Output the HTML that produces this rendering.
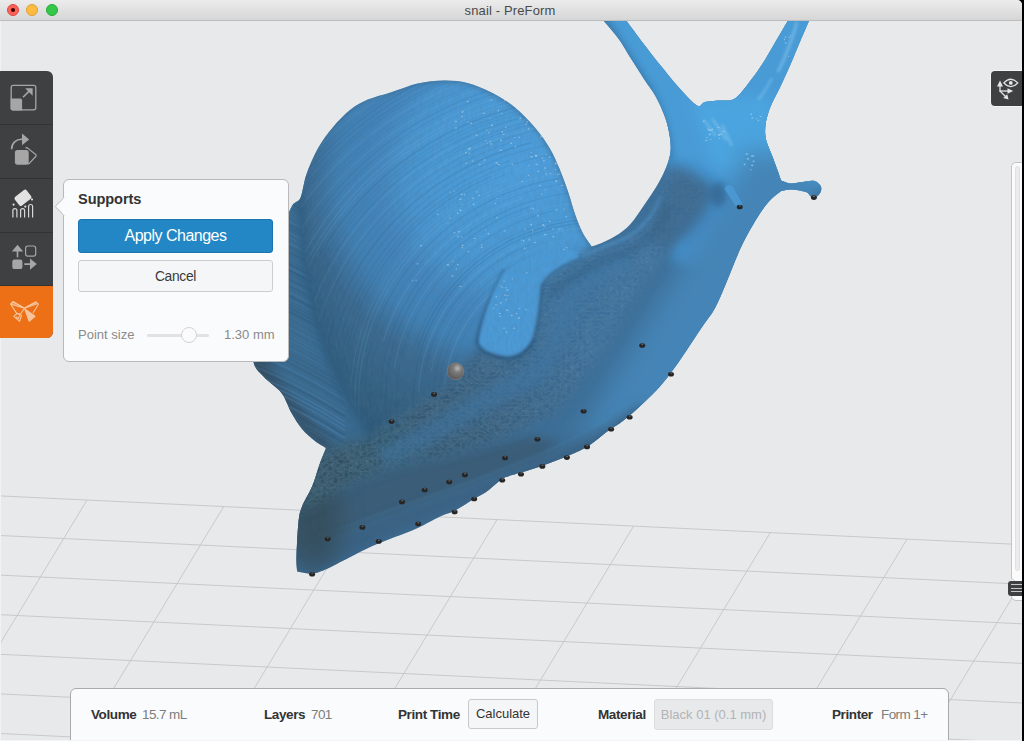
<!DOCTYPE html>
<html><head><meta charset="utf-8">
<style>
html,body{margin:0;padding:0;width:1024px;height:741px;overflow:hidden;background:#000;}
*{box-sizing:border-box;}
body{font-family:"Liberation Sans",sans-serif;position:relative;}
#win{position:absolute;left:0;top:0;width:1022px;height:741px;background:#e8e9eb;overflow:hidden;border-radius:0 5px 0 0;}
#title{position:absolute;left:0;top:0;width:1022px;height:21px;background:linear-gradient(#ececec,#d6d6d6);border-bottom:1px solid #bdbdbd;}
#title .t{position:absolute;left:0;width:1020px;top:3px;text-align:center;font-size:13px;color:#4a4a4a;letter-spacing:0.14px;}
.tl{position:absolute;top:4px;width:12px;height:12px;border-radius:50%;}
#scene{position:absolute;left:0;top:0;}
#tb{position:absolute;left:0;top:71px;width:53px;height:267px;background:#3f4042;border-radius:0 6px 6px 0;overflow:hidden;}
#tb .sep{position:absolute;left:0;width:53px;height:1px;background:#323335;}
#tb .or{position:absolute;left:0;top:215px;width:53px;height:52px;background:#ee7016;}
#pop{position:absolute;left:63px;top:179px;width:226px;height:183px;background:#fafbfc;border:1px solid #b9b9bb;border-radius:6px;}
.btn{position:absolute;border-radius:3px;text-align:center;}
#panel{position:absolute;left:70px;top:688px;width:879px;height:70px;background:#fafbfc;border:1px solid #a9aaac;border-radius:6px;}
.lb{position:absolute;top:18px;font-size:13.5px;font-weight:bold;color:#333;letter-spacing:-0.4px;}
.vl{position:absolute;top:18px;font-size:13.5px;color:#7d7d7d;letter-spacing:-0.6px;}
</style></head><body>
<div id="win">
<svg id="scene" width="1022" height="741" viewBox="0 0 1022 741">
<g stroke="#c9c9cb" stroke-width="1" fill="none">
<line x1="0.0" y1="495.9" x2="1024.0" y2="544.7"/>
<line x1="0.0" y1="535.5" x2="1024.0" y2="584.3"/>
<line x1="0.0" y1="575.1" x2="1024.0" y2="623.9"/>
<line x1="0.0" y1="614.7" x2="1024.0" y2="663.5"/>
<line x1="0.0" y1="654.3" x2="1024.0" y2="703.1"/>
<line x1="0.0" y1="693.9" x2="1024.0" y2="742.7"/>
<line x1="0.0" y1="733.5" x2="1024.0" y2="782.3"/>
<line x1="87.0" y1="500.0" x2="-70.3" y2="760.0"/>
<line x1="223.7" y1="506.6" x2="70.3" y2="760.0"/>
<line x1="360.3" y1="513.1" x2="210.9" y2="760.0"/>
<line x1="497.0" y1="519.6" x2="351.5" y2="760.0"/>
<line x1="633.6" y1="526.1" x2="492.1" y2="760.0"/>
<line x1="770.3" y1="532.6" x2="632.7" y2="760.0"/>
<line x1="907.0" y1="539.2" x2="773.4" y2="760.0"/>
<line x1="1043.6" y1="545.7" x2="914.0" y2="760.0"/>
</g>
<!--SNAIL-->
<defs>
<clipPath id="clip"><path d="M596.0,12.0 C599.6,16.3 612.0,30.0 617.8,37.7 C623.6,45.5 626.6,51.6 631.0,58.5 C635.4,65.4 640.1,72.9 644.2,79.2 C648.3,85.5 652.1,89.9 655.6,96.2 C659.1,102.5 662.6,110.4 665.0,117.0 C667.4,123.6 668.8,130.1 669.7,135.9 C670.6,141.7 671.1,146.7 670.5,152.0 C669.9,157.3 668.2,162.2 666.0,167.8 C663.8,173.4 660.6,179.7 657.1,185.6 C653.6,191.5 649.7,197.0 645.2,203.4 C640.7,209.8 635.2,218.8 630.3,224.2 C625.3,229.6 620.5,232.9 615.5,236.1 C610.5,239.3 604.6,241.8 600.6,243.5 C596.6,245.2 593.2,246.0 591.7,246.5 C590.2,244.3 585.5,238.3 582.8,233.1 C580.1,227.9 577.9,222.2 575.4,215.3 C572.9,208.4 570.7,199.5 568.0,191.6 C565.3,183.7 562.2,175.1 559.1,167.8 C556.0,160.5 553.6,154.6 549.6,147.9 C545.6,141.2 540.8,134.2 534.9,127.4 C529.0,120.6 521.7,112.8 514.4,106.9 C507.1,101.0 498.8,96.2 491.0,92.2 C483.2,88.2 475.3,84.9 467.5,82.9 C459.7,81.0 452.4,80.4 444.1,80.5 C435.8,80.6 426.5,81.5 417.7,83.4 C408.9,85.4 399.6,89.5 391.3,92.2 C383.0,94.9 374.7,96.7 367.9,99.6 C361.1,102.5 356.2,105.2 350.3,109.8 C344.4,114.4 338.1,121.1 332.7,127.4 C327.3,133.8 322.5,140.1 318.1,147.9 C313.7,155.7 309.3,166.0 306.4,174.3 C303.5,182.6 302.9,192.3 300.5,197.7 C298.1,203.1 295.1,200.3 291.7,206.5 C288.3,212.7 284.9,222.8 280.0,235.0 C275.1,247.2 266.5,264.2 262.0,280.0 C257.5,295.8 254.4,316.3 253.0,330.0 C251.6,343.7 251.7,354.2 253.5,362.0 C255.3,369.8 259.3,371.8 264.0,377.0 C268.7,382.2 276.9,387.0 281.5,393.0 C286.1,399.0 288.1,407.0 291.5,413.0 C294.9,419.0 298.1,424.3 302.0,429.0 C305.9,433.7 311.0,437.8 315.0,441.0 C319.0,444.2 324.2,446.8 326.0,448.0 C324.8,451.0 321.3,459.5 319.0,465.9 C316.7,472.3 315.0,479.7 312.1,486.6 C309.2,493.5 304.1,501.1 301.8,507.2 C299.5,513.3 299.3,514.9 298.4,523.3 C297.5,531.7 296.7,549.7 296.5,557.7 C296.3,565.7 297.1,569.2 297.2,571.5 C299.7,571.8 307.3,573.8 312.1,573.4 C316.9,573.0 319.8,571.8 325.9,569.2 C332.0,566.6 341.2,561.5 348.9,557.7 C356.5,553.9 364.1,549.7 371.8,546.3 C379.5,542.9 387.2,540.2 394.8,537.1 C402.4,534.0 410.2,531.4 417.7,527.9 C425.2,524.4 433.8,519.3 440.0,516.4 C446.2,513.5 449.4,513.4 455.2,510.4 C461.0,507.4 469.5,501.7 474.7,498.6 C479.9,495.5 482.5,494.6 486.4,491.8 C490.3,489.0 494.9,484.4 498.1,482.0 C501.4,479.6 502.0,478.7 505.9,477.1 C509.8,475.5 515.4,474.2 521.6,472.3 C527.8,470.4 535.2,468.2 543.0,465.4 C550.8,462.6 560.6,459.1 568.4,455.7 C576.2,452.3 583.4,449.0 589.9,444.9 C596.4,440.8 601.9,435.4 607.5,431.3 C613.1,427.2 617.8,425.0 623.7,420.3 C629.7,415.6 637.1,409.0 643.2,403.3 C649.3,397.6 655.2,392.0 660.2,386.3 C665.2,380.6 669.0,375.4 673.5,369.3 C678.0,363.2 682.2,356.8 686.9,349.9 C691.5,343.0 696.8,334.9 701.4,328.0 C706.0,321.1 710.8,315.9 714.8,308.6 C718.8,301.3 722.2,292.4 725.7,284.3 C729.2,276.2 732.5,267.1 735.5,260.0 C738.5,252.9 740.6,247.8 743.5,242.0 C746.4,236.2 749.8,230.3 752.9,225.0 C756.0,219.7 759.1,214.3 762.3,209.9 C765.4,205.5 768.6,201.8 771.8,198.6 C774.9,195.4 779.6,192.3 781.2,191.0 C782.8,190.8 786.6,189.3 790.7,189.5 C794.8,189.7 802.4,190.8 805.8,192.0 C809.2,193.2 809.3,195.7 811.0,196.5 C812.7,197.3 814.4,197.7 816.0,197.0 C817.6,196.3 819.7,194.3 820.5,192.5 C821.3,190.7 821.8,188.2 820.9,186.3 C820.0,184.4 817.7,182.0 815.2,181.2 C812.7,180.4 809.9,181.2 805.8,181.6 C801.7,182.0 794.8,183.7 790.7,183.5 C786.6,183.3 782.8,181.1 781.2,180.6 C780.6,178.9 779.1,174.4 777.5,170.2 C775.9,165.9 773.7,160.1 771.8,155.1 C769.9,150.1 767.2,144.5 766.1,140.0 C765.0,135.5 765.0,131.8 765.2,128.0 C765.4,124.2 766.0,121.0 767.1,117.0 C768.2,113.0 769.4,109.1 771.8,103.8 C774.1,98.5 778.1,91.5 781.2,84.9 C784.4,78.3 787.6,71.3 790.7,64.1 C793.9,56.9 796.4,50.2 800.1,41.5 C803.8,32.8 810.9,16.9 813.0,12.0 C809.7,12.0 796.3,12.0 793.0,12.0 C790.1,16.9 780.7,32.8 775.6,41.5 C770.5,50.2 767.0,56.9 762.3,64.1 C757.6,71.3 751.9,79.1 747.2,84.9 C742.5,90.7 738.7,96.4 734.0,99.0 C729.3,101.6 723.7,100.0 718.9,100.5 C714.1,101.0 708.6,101.2 705.0,102.0 C701.4,102.8 701.5,108.0 697.0,105.5 C692.5,103.0 684.5,93.7 678.2,86.8 C671.9,79.9 664.8,70.7 659.4,64.1 C654.0,57.5 652.7,55.8 646.1,47.1 C639.5,38.4 624.4,17.9 620.0,12.0 C616.0,12.0 600.0,12.0 596.0,12.0 Z"/></clipPath>
<clipPath id="domeClip"><path d="M300.5,187.6 L302.4,236.7 308,274.5 319.4,323.6 330.7,361.4 345.8,391.6 361,418 372.3,437 392,421 451,382 478,350 488,352 507,356 521,353 532,338 538,312 540,285 549,274 566,263 580,257 591.7,246.5 582.8,233.1 575.4,215.3 568,191.6 559.1,167.8 549.6,147.9 534.9,127.4 514.4,106.9 491,92.2 467.5,82.9 444.1,80.5 417.7,83.4 391.3,92.2 367.9,99.6 350.3,109.8 332.7,127.4 318.1,147.9 306.4,174.3 Z"/></clipPath>
<mask id="mantMask" maskUnits="userSpaceOnUse" x="0" y="0" width="1022" height="741"><path d="M330,448 L372,437 392,421 451,382 478,350 488,352 507,356 521,353 532,338 538,312 540,285 549,274 566,263 580,257 608,243 634,233 650,215 662,190 670,165 690,172 712,188 700,212 672,245 640,290 605,350 560,410 488,445 446,456 403,465 361,479 324,499 298,513 315,455 Z" fill="#fff" filter="url(#b6)"/></mask>
<filter id="b15" filterUnits="userSpaceOnUse" x="0" y="0" width="1022" height="741"><feGaussianBlur stdDeviation="1.5"/></filter>
<filter id="b3" filterUnits="userSpaceOnUse" x="0" y="0" width="1022" height="741"><feGaussianBlur stdDeviation="3"/></filter>
<filter id="b6" filterUnits="userSpaceOnUse" x="0" y="0" width="1022" height="741"><feGaussianBlur stdDeviation="6"/></filter>
<filter id="b12" filterUnits="userSpaceOnUse" x="0" y="0" width="1022" height="741"><feGaussianBlur stdDeviation="12"/></filter>
<filter id="tex" filterUnits="userSpaceOnUse" x="0" y="0" width="1022" height="741"><feTurbulence type="fractalNoise" baseFrequency="0.35 0.12" numOctaves="2" seed="3"/><feColorMatrix type="matrix" values="0 0 0 0 0.1  0 0 0 0 0.2  0 0 0 0 0.3  0 0 0 -2.2 1.3"/></filter>
<filter id="tex2" filterUnits="userSpaceOnUse" x="0" y="0" width="1022" height="741"><feTurbulence type="turbulence" baseFrequency="0.18 0.25" numOctaves="2" seed="5"/><feColorMatrix type="matrix" values="0 0 0 0 0.12  0 0 0 0 0.25  0 0 0 0 0.38  -1.6 0 0 0 0.95"/></filter>
<filter id="tex3" filterUnits="userSpaceOnUse" x="0" y="0" width="1022" height="741"><feTurbulence type="turbulence" baseFrequency="0.2 0.3" numOctaves="2" seed="9"/><feColorMatrix type="matrix" values="0 0 0 0 0.45  0 0 0 0 0.7  0 0 0 0 0.9  2.2 0 0 0 -0.55"/></filter>
<radialGradient id="domeG" cx="520" cy="170" r="300" gradientUnits="userSpaceOnUse">
<stop offset="0" stop-color="#4f9fdc"/><stop offset="0.12" stop-color="#4d9cd9"/><stop offset="0.3" stop-color="#4b98d3"/><stop offset="0.39" stop-color="#4892cb"/><stop offset="0.48" stop-color="#4485bc"/><stop offset="0.6" stop-color="#4180b3"/><stop offset="0.71" stop-color="#3b6a90"/><stop offset="0.9" stop-color="#35607f"/><stop offset="1" stop-color="#325a78"/></radialGradient>
<linearGradient id="mantG" x1="340" y1="470" x2="700" y2="200" gradientUnits="userSpaceOnUse">
<stop offset="0" stop-color="#30505f"/><stop offset="0.3" stop-color="#365a76"/><stop offset="0.6" stop-color="#3b6d98"/><stop offset="1" stop-color="#3d73a0"/></linearGradient>
<linearGradient id="whorlG" x1="255" y1="360" x2="330" y2="330" gradientUnits="userSpaceOnUse">
<stop offset="0" stop-color="#385770"/><stop offset="0.3" stop-color="#3b6a8f"/><stop offset="1" stop-color="#3a6a8f"/></linearGradient>
</defs>
<g clip-path="url(#clip)">
<rect x="240" y="10" width="600" height="580" fill="#3d6f98"/>
<path filter="url(#b6)" fill="#4590cb" d="M660,120 L780,120 770,210 735,250 700,270 670,260 675,200 Z"/>
<path filter="url(#b6)" fill="#4a9bd6" d="M590,0 L840,0 840,180 780,200 740,200 715,175 690,160 668,165 660,120 Z"/>
<path filter="url(#b6)" fill="#4ca4df" d="M690,100 L770,95 780,160 750,180 712,165 Z"/>
<path filter="url(#b12)" fill="#4484b6" d="M745,150 L820,160 800,260 720,400 640,470 575,445 615,375 650,315 685,260 712,218 735,180 Z"/>
<path filter="url(#b6)" fill="#3a5d78" d="M280,513 L324,499 361,479 403,465 446,456 488,445 530,436 560,440 545,462 460,495 375,530 280,575 Z"/>
<path filter="url(#b6)" fill="#3b6283" d="M300,556 L375,522 460,490 545,456 605,428 640,405 660,420 600,450 520,485 420,525 330,566 300,580 Z"/>
<path filter="url(#b3)" fill="none" stroke="#4d86ad" stroke-width="4" opacity="0.22" d="M302,552 C340,535 380,518 460,490 C500,476 530,466 600,432"/>
<path filter="url(#b15)" fill="none" stroke="#5590b8" stroke-width="1.5" opacity="0.3" d="M310,540 C360,520 420,500 480,478 C520,462 560,448 610,418"/>
<ellipse filter="url(#b12)" cx="315" cy="520" rx="26" ry="50" fill="#34505f"/>
<path filter="url(#b3)" fill="url(#whorlG)" d="M300,185 L296,200 285,215 262,260 250,320 252,360 262,378 278,396 296,414 316,438 330,448 372,437 361,418 346,392 331,361 319,324 308,275 302,237 Z"/>
<path filter="url(#b6)" fill="none" stroke="#344b5c" stroke-width="14" opacity="0.8" d="M254,340 L256,365 265,382 280,398 296,414 310,432 330,448"/>
<clipPath id="whClip"><path d="M300,185 L296,200 285,215 262,260 250,320 252,360 262,378 278,396 296,414 316,438 330,448 372,437 361,418 346,392 331,361 319,324 308,275 302,237 Z"/></clipPath>
<g clip-path="url(#whClip)" fill="none"><path d="M245,184.4 Q290,199.4 345,234.4" stroke="#22445e" stroke-width="1.3" opacity="0.24"/><path d="M245,188.9 Q290,203.9 345,238.9" stroke="#22445e" stroke-width="1.3" opacity="0.13"/><path d="M245,193.8 Q290,208.8 345,243.8" stroke="#5c9bd0" stroke-width="1.1" opacity="0.11"/><path d="M245,197.0 Q290,212.0 345,247.0" stroke="#5c9bd0" stroke-width="0.8" opacity="0.20"/><path d="M245,203.0 Q290,218.0 345,253.0" stroke="#5c9bd0" stroke-width="1.4" opacity="0.20"/><path d="M245,206.5 Q290,221.5 345,256.5" stroke="#22445e" stroke-width="0.9" opacity="0.18"/><path d="M245,210.0 Q290,225.0 345,260.0" stroke="#22445e" stroke-width="1.3" opacity="0.10"/><path d="M245,214.4 Q290,229.4 345,264.4" stroke="#5c9bd0" stroke-width="1.4" opacity="0.18"/><path d="M245,218.9 Q290,233.9 345,268.9" stroke="#5c9bd0" stroke-width="1.1" opacity="0.17"/><path d="M245,224.8 Q290,239.8 345,274.8" stroke="#5c9bd0" stroke-width="1.5" opacity="0.23"/><path d="M245,228.8 Q290,243.8 345,278.8" stroke="#22445e" stroke-width="0.9" opacity="0.14"/><path d="M245,234.1 Q290,249.1 345,284.1" stroke="#22445e" stroke-width="1.2" opacity="0.23"/><path d="M245,240.0 Q290,255.0 345,290.0" stroke="#5c9bd0" stroke-width="1.0" opacity="0.10"/><path d="M245,245.7 Q290,260.7 345,295.7" stroke="#22445e" stroke-width="1.2" opacity="0.25"/><path d="M245,248.9 Q290,263.9 345,298.9" stroke="#5c9bd0" stroke-width="1.1" opacity="0.22"/><path d="M245,252.2 Q290,267.2 345,302.2" stroke="#22445e" stroke-width="1.6" opacity="0.24"/><path d="M245,255.5 Q290,270.5 345,305.5" stroke="#22445e" stroke-width="0.9" opacity="0.12"/><path d="M245,260.9 Q290,275.9 345,310.9" stroke="#22445e" stroke-width="1.2" opacity="0.18"/><path d="M245,264.5 Q290,279.5 345,314.5" stroke="#5c9bd0" stroke-width="1.4" opacity="0.12"/><path d="M245,267.8 Q290,282.8 345,317.8" stroke="#22445e" stroke-width="1.1" opacity="0.13"/><path d="M245,273.8 Q290,288.8 345,323.8" stroke="#5c9bd0" stroke-width="1.7" opacity="0.15"/><path d="M245,277.4 Q290,292.4 345,327.4" stroke="#22445e" stroke-width="1.4" opacity="0.23"/><path d="M245,280.7 Q290,295.7 345,330.7" stroke="#5c9bd0" stroke-width="1.1" opacity="0.13"/><path d="M245,286.0 Q290,301.0 345,336.0" stroke="#22445e" stroke-width="0.9" opacity="0.14"/><path d="M245,289.3 Q290,304.3 345,339.3" stroke="#22445e" stroke-width="1.4" opacity="0.14"/><path d="M245,293.4 Q290,308.4 345,343.4" stroke="#22445e" stroke-width="1.3" opacity="0.24"/><path d="M245,298.1 Q290,313.1 345,348.1" stroke="#5c9bd0" stroke-width="1.0" opacity="0.13"/><path d="M245,303.8 Q290,318.8 345,353.8" stroke="#5c9bd0" stroke-width="1.0" opacity="0.14"/><path d="M245,309.1 Q290,324.1 345,359.1" stroke="#5c9bd0" stroke-width="1.8" opacity="0.13"/><path d="M245,314.7 Q290,329.7 345,364.7" stroke="#5c9bd0" stroke-width="0.9" opacity="0.16"/><path d="M245,317.8 Q290,332.8 345,367.8" stroke="#5c9bd0" stroke-width="1.5" opacity="0.14"/><path d="M245,321.6 Q290,336.6 345,371.6" stroke="#5c9bd0" stroke-width="1.1" opacity="0.19"/><path d="M245,325.1 Q290,340.1 345,375.1" stroke="#5c9bd0" stroke-width="1.0" opacity="0.11"/><path d="M245,329.8 Q290,344.8 345,379.8" stroke="#5c9bd0" stroke-width="1.1" opacity="0.19"/><path d="M245,335.5 Q290,350.5 345,385.5" stroke="#22445e" stroke-width="1.1" opacity="0.10"/><path d="M245,339.9 Q290,354.9 345,389.9" stroke="#22445e" stroke-width="1.2" opacity="0.13"/><path d="M245,344.6 Q290,359.6 345,394.6" stroke="#22445e" stroke-width="1.7" opacity="0.15"/><path d="M245,350.5 Q290,365.5 345,400.5" stroke="#5c9bd0" stroke-width="1.4" opacity="0.20"/><path d="M245,354.0 Q290,369.0 345,404.0" stroke="#22445e" stroke-width="1.7" opacity="0.10"/><path d="M245,359.1 Q290,374.1 345,409.1" stroke="#5c9bd0" stroke-width="1.4" opacity="0.10"/><path d="M245,363.5 Q290,378.5 345,413.5" stroke="#5c9bd0" stroke-width="1.8" opacity="0.15"/><path d="M245,366.7 Q290,381.7 345,416.7" stroke="#22445e" stroke-width="1.7" opacity="0.21"/><path d="M245,372.0 Q290,387.0 345,422.0" stroke="#5c9bd0" stroke-width="1.7" opacity="0.22"/><path d="M245,376.0 Q290,391.0 345,426.0" stroke="#5c9bd0" stroke-width="1.7" opacity="0.24"/><path d="M245,380.3 Q290,395.3 345,430.3" stroke="#5c9bd0" stroke-width="1.4" opacity="0.23"/><path d="M245,385.1 Q290,400.1 345,435.1" stroke="#22445e" stroke-width="1.4" opacity="0.19"/><path d="M245,388.4 Q290,403.4 345,438.4" stroke="#5c9bd0" stroke-width="1.7" opacity="0.25"/><path d="M245,393.6 Q290,408.6 345,443.6" stroke="#22445e" stroke-width="1.4" opacity="0.21"/><path d="M245,397.9 Q290,412.9 345,447.9" stroke="#5c9bd0" stroke-width="1.6" opacity="0.11"/><path d="M245,401.0 Q290,416.0 345,451.0" stroke="#5c9bd0" stroke-width="1.0" opacity="0.17"/><path d="M245,406.1 Q290,421.1 345,456.1" stroke="#22445e" stroke-width="1.7" opacity="0.19"/><path d="M245,409.8 Q290,424.8 345,459.8" stroke="#22445e" stroke-width="1.5" opacity="0.15"/><path d="M245,413.4 Q290,428.4 345,463.4" stroke="#22445e" stroke-width="1.5" opacity="0.24"/><path d="M245,417.8 Q290,432.8 345,467.8" stroke="#5c9bd0" stroke-width="1.5" opacity="0.15"/><path d="M245,421.4 Q290,436.4 345,471.4" stroke="#22445e" stroke-width="1.7" opacity="0.22"/><path d="M245,427.0 Q290,442.0 345,477.0" stroke="#22445e" stroke-width="1.1" opacity="0.19"/><path d="M245,430.4 Q290,445.4 345,480.4" stroke="#22445e" stroke-width="1.6" opacity="0.23"/><path d="M245,435.5 Q290,450.5 345,485.5" stroke="#5c9bd0" stroke-width="1.0" opacity="0.14"/><path d="M245,439.9 Q290,454.9 345,489.9" stroke="#22445e" stroke-width="1.2" opacity="0.13"/><path d="M245,444.8 Q290,459.8 345,494.8" stroke="#22445e" stroke-width="1.6" opacity="0.15"/><path d="M245,450.7 Q290,465.7 345,500.7" stroke="#22445e" stroke-width="0.8" opacity="0.11"/><path d="M245,456.3 Q290,471.3 345,506.3" stroke="#22445e" stroke-width="1.4" opacity="0.21"/><path d="M245,460.3 Q290,475.3 345,510.3" stroke="#5c9bd0" stroke-width="0.9" opacity="0.10"/></g>
<path filter="url(#b3)" fill="url(#domeG)" d="M300.5,187.6 L302.4,236.7 308,274.5 319.4,323.6 330.7,361.4 345.8,391.6 361,418 372.3,437 392,421 451,382 478,350 488,352 507,356 521,353 532,338 538,312 540,285 549,274 566,263 580,257 591.7,246.5 582.8,233.1 575.4,215.3 568,191.6 559.1,167.8 549.6,147.9 534.9,127.4 514.4,106.9 491,92.2 467.5,82.9 444.1,80.5 417.7,83.4 391.3,92.2 367.9,99.6 350.3,109.8 332.7,127.4 318.1,147.9 306.4,174.3 Z"/>
<g clip-path="url(#domeClip)" fill="none"><path d="M457.0,446.9 A151.3,144.1 0 0 1 630.1,258.8" stroke="#1f4d73" stroke-width="0.8" opacity="0.08"/><path d="M443.9,405.6 A156.2,148.8 0 0 1 604.1,251.3" stroke="#8ccaf2" stroke-width="1.5" opacity="0.13"/><path d="M442.2,432.0 A161.4,153.7 0 0 1 582.5,247.2" stroke="#1f4d73" stroke-width="1.1" opacity="0.08"/><path d="M437.5,435.3 A166.6,158.7 0 0 1 553.0,247.8" stroke="#1f4d73" stroke-width="1.2" opacity="0.09"/><path d="M431.2,370.9 A171.5,163.3 0 0 1 569.3,239.3" stroke="#8ccaf2" stroke-width="0.9" opacity="0.14"/><path d="M424.6,373.9 A177.6,169.1 0 0 1 529.2,244.9" stroke="#1f4d73" stroke-width="1.4" opacity="0.11"/><path d="M418.6,391.7 A181.6,172.9 0 0 1 643.8,232.2" stroke="#8ccaf2" stroke-width="1.1" opacity="0.14"/><path d="M417.4,436.4 A186.6,177.7 0 0 1 619.8,223.3" stroke="#1f4d73" stroke-width="1.3" opacity="0.14"/><path d="M417.4,350.1 A190.0,180.9 0 0 1 661.9,228.9" stroke="#1f4d73" stroke-width="1.4" opacity="0.16"/><path d="M414.1,347.9 A193.8,184.6 0 0 1 642.9,220.0" stroke="#1f4d73" stroke-width="1.1" opacity="0.09"/><path d="M405.0,364.8 A198.4,189.0 0 0 1 580.5,211.9" stroke="#8ccaf2" stroke-width="0.8" opacity="0.06"/><path d="M401.3,444.0 A204.0,194.3 0 0 1 553.2,210.9" stroke="#1f4d73" stroke-width="0.9" opacity="0.14"/><path d="M394.0,369.1 A208.5,198.6 0 0 1 643.4,205.7" stroke="#8ccaf2" stroke-width="1.1" opacity="0.13"/><path d="M394.3,458.3 A214.6,204.4 0 0 1 530.4,206.6" stroke="#1f4d73" stroke-width="1.3" opacity="0.11"/><path d="M380.4,396.7 A219.6,209.2 0 0 1 646.3,195.5" stroke="#1f4d73" stroke-width="1.1" opacity="0.12"/><path d="M383.4,340.8 A225.4,214.6 0 0 1 524.4,197.8" stroke="#8ccaf2" stroke-width="1.2" opacity="0.15"/><path d="M374.9,445.4 A230.1,219.1 0 0 1 587.1,181.2" stroke="#1f4d73" stroke-width="0.8" opacity="0.11"/><path d="M363.7,397.5 A236.3,225.0 0 0 1 559.1,178.4" stroke="#1f4d73" stroke-width="1.1" opacity="0.14"/><path d="M369.6,468.6 A241.4,229.9 0 0 1 587.1,170.4" stroke="#8ccaf2" stroke-width="1.4" opacity="0.10"/><path d="M355.0,404.4 A245.0,233.4 0 0 1 501.7,186.2" stroke="#8ccaf2" stroke-width="1.4" opacity="0.10"/><path d="M352.6,430.2 A249.4,237.5 0 0 1 512.9,177.4" stroke="#8ccaf2" stroke-width="0.9" opacity="0.12"/><path d="M359.1,479.4 A254.9,242.8 0 0 1 511.6,172.3" stroke="#1f4d73" stroke-width="1.0" opacity="0.08"/><path d="M342.1,379.4 A258.8,246.5 0 0 1 491.6,176.1" stroke="#1f4d73" stroke-width="1.2" opacity="0.13"/><path d="M343.4,452.3 A262.4,249.9 0 0 1 584.1,150.6" stroke="#1f4d73" stroke-width="1.1" opacity="0.10"/><path d="M340.5,459.8 A267.0,254.2 0 0 1 509.6,160.8" stroke="#1f4d73" stroke-width="1.2" opacity="0.12"/><path d="M328.1,379.8 A272.7,259.7 0 0 1 660.6,146.8" stroke="#1f4d73" stroke-width="1.4" opacity="0.08"/><path d="M323.6,434.0 A278.7,265.4 0 0 1 531.4,142.8" stroke="#1f4d73" stroke-width="1.5" opacity="0.15"/><path d="M324.7,468.5 A284.5,271.0 0 0 1 511.9,142.3" stroke="#1f4d73" stroke-width="0.9" opacity="0.13"/><path d="M310.2,415.1 A290.2,276.4 0 0 1 647.9,127.4" stroke="#1f4d73" stroke-width="1.3" opacity="0.07"/><path d="M313.4,457.8 A292.9,279.0 0 0 1 621.0,121.8" stroke="#8ccaf2" stroke-width="0.9" opacity="0.15"/><path d="M307.4,349.2 A297.4,283.2 0 0 1 574.8,117.8" stroke="#1f4d73" stroke-width="0.8" opacity="0.13"/><path d="M315.1,490.8 A300.4,286.1 0 0 1 587.3,114.1" stroke="#1f4d73" stroke-width="0.9" opacity="0.11"/><path d="M302.7,459.4 A303.7,289.3 0 0 1 663.2,117.1" stroke="#8ccaf2" stroke-width="0.9" opacity="0.16"/><path d="M308.5,309.5 A306.6,292.0 0 0 1 563.2,110.1" stroke="#1f4d73" stroke-width="1.1" opacity="0.14"/><path d="M289.3,414.5 A311.1,296.3 0 0 1 600.3,103.7" stroke="#1f4d73" stroke-width="1.4" opacity="0.06"/><path d="M285.8,409.6 A314.4,299.4 0 0 1 638.1,102.8" stroke="#1f4d73" stroke-width="0.9" opacity="0.10"/><path d="M299.2,500.8 A318.9,303.7 0 0 1 680.7,106.2" stroke="#1f4d73" stroke-width="1.4" opacity="0.14"/><path d="M276.9,420.5 A323.8,308.4 0 0 1 599.9,91.6" stroke="#8ccaf2" stroke-width="1.4" opacity="0.11"/><path d="M286.0,311.7 A327.4,311.8 0 0 1 641.2,90.7" stroke="#8ccaf2" stroke-width="1.1" opacity="0.14"/><path d="M278.3,316.8 A333.3,317.4 0 0 1 627.5,83.6" stroke="#8ccaf2" stroke-width="1.1" opacity="0.14"/><path d="M276.5,495.2 A338.6,322.5 0 0 1 524.3,85.7" stroke="#1f4d73" stroke-width="1.0" opacity="0.11"/><path d="M257.7,371.7 A343.6,327.2 0 0 1 491.6,89.5" stroke="#1f4d73" stroke-width="1.0" opacity="0.15"/><path d="M251.8,383.9 A348.6,332.0 0 0 1 579.7,68.5" stroke="#8ccaf2" stroke-width="1.2" opacity="0.10"/><path d="M252.1,338.8 A353.8,337.0 0 0 1 715.2,81.4" stroke="#1f4d73" stroke-width="1.3" opacity="0.06"/><path d="M243.4,423.4 A357.4,340.4 0 0 1 435.1,98.0" stroke="#1f4d73" stroke-width="0.9" opacity="0.08"/><path d="M253.4,303.9 A360.9,343.8 0 0 1 584.3,56.6" stroke="#8ccaf2" stroke-width="1.2" opacity="0.11"/><path d="M234.5,366.4 A367.2,349.7 0 0 1 666.8,56.1" stroke="#1f4d73" stroke-width="1.3" opacity="0.07"/><path d="M246.5,295.8 A370.0,352.4 0 0 1 461.4,73.3" stroke="#1f4d73" stroke-width="1.1" opacity="0.11"/><path d="M242.8,508.3 A374.9,357.0 0 0 1 711.3,59.1" stroke="#1f4d73" stroke-width="1.2" opacity="0.10"/><path d="M225.4,453.8 A378.9,360.8 0 0 1 618.2,39.6" stroke="#1f4d73" stroke-width="1.3" opacity="0.12"/><path d="M239.2,521.3 A382.6,364.3 0 0 1 483.4,53.0" stroke="#1f4d73" stroke-width="1.3" opacity="0.06"/><path d="M228.2,299.1 A386.6,368.2 0 0 1 649.9,34.9" stroke="#8ccaf2" stroke-width="1.5" opacity="0.07"/><path d="M226.0,296.4 A389.5,371.0 0 0 1 542.3,33.1" stroke="#8ccaf2" stroke-width="1.0" opacity="0.11"/><path d="M224.2,287.2 A394.1,375.3 0 0 1 642.1,26.8" stroke="#8ccaf2" stroke-width="1.4" opacity="0.11"/><path d="M215.4,500.9 A398.9,379.9 0 0 1 608.4,20.2" stroke="#1f4d73" stroke-width="0.8" opacity="0.11"/><path d="M210.3,499.6 A403.5,384.3 0 0 1 544.8,19.3" stroke="#1f4d73" stroke-width="1.0" opacity="0.13"/><path d="M192.4,421.8 A408.2,388.8 0 0 1 663.1,15.9" stroke="#8ccaf2" stroke-width="1.5" opacity="0.11"/><path d="M193.3,471.5 A413.6,393.9 0 0 1 429.8,41.0" stroke="#8ccaf2" stroke-width="1.2" opacity="0.15"/><path d="M187.8,463.2 A417.5,397.6 0 0 1 631.0,3.5" stroke="#1f4d73" stroke-width="1.2" opacity="0.12"/><path d="M187.0,486.5 A422.9,402.8 0 0 1 472.5,16.0" stroke="#8ccaf2" stroke-width="1.4" opacity="0.16"/><path d="M194.2,522.4 A425.7,405.4 0 0 1 479.4,11.2" stroke="#1f4d73" stroke-width="0.9" opacity="0.10"/><path d="M188.7,520.5 A430.3,409.8 0 0 1 413.6,30.7" stroke="#1f4d73" stroke-width="1.2" opacity="0.13"/><path d="M165.8,406.2 A434.3,413.6 0 0 1 455.3,10.0" stroke="#1f4d73" stroke-width="1.4" opacity="0.09"/><path d="M178.1,509.2 A437.2,416.4 0 0 1 679.4,-9.4" stroke="#8ccaf2" stroke-width="0.9" opacity="0.12"/><path d="M164.9,470.7 A441.4,420.4 0 0 1 680.4,-13.3" stroke="#1f4d73" stroke-width="1.5" opacity="0.10"/></g>
<path filter="url(#b3)" fill="none" stroke="#2b5273" stroke-width="7" stroke-opacity="0.55" d="M301,195 C301,240 306,280 318,322 C328,360 345,395 375,440"/>
<path filter="url(#b6)" fill="none" stroke="#2f5a7d" stroke-width="22" stroke-opacity="0.3" d="M318,250 C318,290 324,330 336,365 C348,395 362,420 385,440"/>
<path filter="url(#b6)" fill="url(#mantG)" d="M330,448 L372,437 392,421 451,382 478,350 488,352 507,356 521,353 532,338 538,312 540,285 549,274 566,263 580,257 608,243 634,233 650,215 662,190 670,165 690,172 712,188 700,212 672,245 640,290 605,350 560,410 488,445 446,456 403,465 361,479 324,499 298,513 315,455 Z"/>
<g mask="url(#mantMask)"><rect x="290" y="140" width="460" height="380" filter="url(#tex2)" opacity="0.4"/><rect x="290" y="140" width="460" height="380" filter="url(#tex3)" opacity="0.08"/></g>
<path filter="url(#b6)" fill="none" stroke="#3f77a5" stroke-width="20" opacity="0.55" d="M380,458 C410,445 440,428 470,410 C490,398 510,385 530,378 C548,365 560,330 570,300 C585,280 605,270 630,262"/>
<path filter="url(#b3)" fill="none" stroke="#2c5577" stroke-width="8" opacity="0.35" d="M548,295 C566,280 596,262 626,252 C646,244 660,228 668,205"/>
<path filter="url(#b15)" fill="none" stroke="#4f92c6" stroke-width="3" opacity="0.6" d="M541,283 C559,267 589,251 619,241 C639,233 654,216 661,196"/>
<path filter="url(#b15)" fill="none" stroke="#2a557a" stroke-width="4" stroke-opacity="0.7" d="M505,270 C493,292 481,318 477,342 C480,352 492,357 508,358 C520,358 530,350 534,338"/>
<path filter="url(#b15)" fill="none" stroke="#2a557a" stroke-width="3" stroke-opacity="0.5" d="M535,336 C539,320 541,300 542,285 C547,276 558,266 582,257"/>
<path filter="url(#b15)" fill="#4c99d5" d="M503,272 C492,292 482,318 479,342 C482,350 492,354 507,356 C518,356 528,348 532,338 C537,322 539,300 540,285 C545,276 556,266 580,257 L560,240 Z"/>
<path filter="url(#b6)" fill="#3a6283" opacity="0.5" d="M672,168 L690,175 715,190 708,212 690,235 660,250 650,240 660,205 Z"/>
<path filter="url(#b3)" fill="#2f5a80" opacity="0.55" d="M712,184 L724,183 727,200 718,208 710,200 Z"/>
<path fill="#4a97d2" d="M724.5,189 C726,184 731,184 733.5,188 L742,203 C743,207 739,209.5 737,208 Z"/>
<path filter="url(#b3)" fill="none" stroke="#3a77a8" stroke-width="6" opacity="0.7" d="M604,18 L632,62 656,100 668,135 671,160"/>
<path filter="url(#b15)" fill="none" stroke="#9ad4f7" stroke-width="2.5" opacity="0.55" d="M797,22 C792,40 785,58 778,72"/>
<path filter="url(#b15)" fill="none" stroke="#9ad4f7" stroke-width="2" opacity="0.45" d="M772,78 C768,86 763,94 758,100"/>
<path filter="url(#b15)" fill="none" stroke="#a8dcf9" stroke-width="2" opacity="0.45" d="M704,120 L716,136 M712,118 L726,140 M722,125 L732,146"/>
<path filter="url(#b3)" fill="none" stroke="#3b7fb5" stroke-width="5" opacity="0.5" d="M602,20 C620,45 640,75 652,92"/>
<g fill="#d8eefc" opacity="0.45"><ellipse cx="709.8" cy="134.4" rx="1.1" ry="0.9"/><ellipse cx="712.3" cy="129.3" rx="0.7" ry="0.9"/><ellipse cx="703.9" cy="121.3" rx="1.0" ry="0.7"/><ellipse cx="718.4" cy="127.4" rx="1.1" ry="0.5"/><ellipse cx="707.1" cy="137.5" rx="0.7" ry="0.6"/><ellipse cx="719.4" cy="138.4" rx="0.8" ry="0.6"/><ellipse cx="710.6" cy="139.3" rx="0.9" ry="0.5"/><ellipse cx="719.0" cy="134.9" rx="1.2" ry="0.9"/><ellipse cx="723.9" cy="131.3" rx="1.2" ry="0.6"/><ellipse cx="709.6" cy="130.2" rx="1.3" ry="0.9"/><ellipse cx="708.0" cy="129.1" rx="0.9" ry="0.6"/><ellipse cx="711.5" cy="129.9" rx="0.7" ry="0.7"/><ellipse cx="721.1" cy="134.1" rx="1.2" ry="0.7"/><ellipse cx="706.2" cy="140.3" rx="1.2" ry="0.6"/><ellipse cx="751.2" cy="114.3" rx="1.0" ry="0.7"/><ellipse cx="760.7" cy="116.4" rx="1.2" ry="0.5"/><ellipse cx="756.5" cy="118.6" rx="0.7" ry="0.5"/><ellipse cx="758.4" cy="120.4" rx="0.7" ry="0.8"/><ellipse cx="752.4" cy="117.9" rx="1.1" ry="0.6"/><ellipse cx="744.6" cy="164.4" rx="1.0" ry="0.8"/><ellipse cx="746.7" cy="154.1" rx="1.3" ry="0.8"/><ellipse cx="747.9" cy="158.9" rx="1.1" ry="0.8"/><ellipse cx="753.0" cy="155.9" rx="1.2" ry="0.8"/><ellipse cx="752.2" cy="165.3" rx="1.2" ry="0.9"/><ellipse cx="753.5" cy="161.4" rx="1.0" ry="0.8"/><ellipse cx="751.6" cy="156.1" rx="0.9" ry="0.6"/><ellipse cx="750.9" cy="169.8" rx="0.9" ry="0.6"/><ellipse cx="785.6" cy="42.9" rx="0.8" ry="0.9"/><ellipse cx="784.5" cy="39.6" rx="0.7" ry="0.8"/><ellipse cx="790.2" cy="36.0" rx="0.6" ry="0.7"/><ellipse cx="788.7" cy="56.5" rx="0.6" ry="0.5"/><ellipse cx="785.5" cy="37.1" rx="0.8" ry="0.8"/><ellipse cx="788.8" cy="37.3" rx="0.7" ry="0.6"/><ellipse cx="470.5" cy="148.0" rx="0.8" ry="0.7"/><ellipse cx="528.5" cy="128.6" rx="0.8" ry="0.9"/><ellipse cx="537.3" cy="118.9" rx="1.0" ry="0.9"/><ellipse cx="498.4" cy="110.5" rx="0.6" ry="0.9"/><ellipse cx="527.1" cy="121.9" rx="1.0" ry="0.7"/><ellipse cx="479.7" cy="164.3" rx="1.1" ry="0.6"/><ellipse cx="456.0" cy="128.1" rx="0.9" ry="0.8"/><ellipse cx="519.2" cy="137.4" rx="0.7" ry="0.6"/><ellipse cx="484.0" cy="113.2" rx="1.2" ry="0.7"/><ellipse cx="512.3" cy="164.5" rx="0.8" ry="0.7"/><ellipse cx="468.6" cy="148.9" rx="0.6" ry="0.8"/><ellipse cx="531.2" cy="152.5" rx="0.7" ry="0.6"/><ellipse cx="519.5" cy="101.8" rx="0.9" ry="0.7"/><ellipse cx="541.0" cy="136.1" rx="1.2" ry="0.6"/><ellipse cx="526.0" cy="124.2" rx="1.2" ry="0.5"/><ellipse cx="529.4" cy="109.6" rx="1.0" ry="0.7"/><ellipse cx="469.2" cy="153.2" rx="0.8" ry="0.6"/><ellipse cx="461.8" cy="116.4" rx="0.9" ry="0.8"/><ellipse cx="487.4" cy="143.1" rx="0.7" ry="0.7"/><ellipse cx="496.6" cy="162.7" rx="1.2" ry="0.8"/><ellipse cx="456.1" cy="121.4" rx="1.1" ry="0.6"/><ellipse cx="505.8" cy="127.1" rx="0.6" ry="0.9"/><ellipse cx="527.0" cy="109.5" rx="1.0" ry="0.6"/><ellipse cx="488.8" cy="132.8" rx="0.8" ry="0.6"/><ellipse cx="490.3" cy="141.7" rx="0.8" ry="0.6"/><ellipse cx="520.8" cy="118.1" rx="1.3" ry="0.7"/><ellipse cx="520.1" cy="118.2" rx="1.2" ry="0.5"/><ellipse cx="467.7" cy="101.6" rx="1.1" ry="0.8"/><ellipse cx="471.2" cy="123.2" rx="1.2" ry="0.7"/><ellipse cx="463.1" cy="110.9" rx="0.7" ry="0.5"/><ellipse cx="491.6" cy="100.1" rx="1.2" ry="0.7"/><ellipse cx="501.0" cy="140.3" rx="1.1" ry="0.8"/><ellipse cx="489.7" cy="118.2" rx="0.9" ry="0.5"/><ellipse cx="491.1" cy="144.0" rx="1.3" ry="0.8"/><ellipse cx="514.4" cy="137.6" rx="0.6" ry="0.6"/><ellipse cx="485.8" cy="140.6" rx="0.7" ry="0.7"/><ellipse cx="500.8" cy="150.2" rx="1.2" ry="0.7"/><ellipse cx="469.3" cy="148.7" rx="1.2" ry="0.7"/><ellipse cx="486.7" cy="130.0" rx="0.7" ry="0.8"/><ellipse cx="543.8" cy="131.1" rx="1.1" ry="0.8"/><ellipse cx="472.7" cy="161.1" rx="1.0" ry="0.6"/><ellipse cx="462.5" cy="112.1" rx="1.0" ry="0.8"/><ellipse cx="484.6" cy="160.0" rx="0.9" ry="0.7"/><ellipse cx="466.2" cy="163.2" rx="0.7" ry="0.9"/><ellipse cx="503.9" cy="134.3" rx="1.0" ry="0.6"/><ellipse cx="536.8" cy="164.4" rx="1.2" ry="0.7"/><ellipse cx="466.0" cy="152.7" rx="0.8" ry="0.9"/><ellipse cx="476.7" cy="135.2" rx="1.2" ry="0.6"/><ellipse cx="504.3" cy="100.3" rx="0.6" ry="0.6"/><ellipse cx="543.8" cy="160.8" rx="1.1" ry="0.6"/><ellipse cx="515.4" cy="146.6" rx="0.9" ry="0.7"/><ellipse cx="527.3" cy="96.1" rx="0.7" ry="0.7"/><ellipse cx="467.9" cy="122.0" rx="1.0" ry="0.6"/><ellipse cx="501.8" cy="113.5" rx="1.0" ry="0.6"/><ellipse cx="512.8" cy="97.7" rx="1.1" ry="0.6"/><ellipse cx="541.3" cy="137.0" rx="0.9" ry="0.7"/><ellipse cx="511.1" cy="143.3" rx="1.1" ry="0.8"/><ellipse cx="498.7" cy="164.6" rx="1.2" ry="0.8"/><ellipse cx="491.8" cy="125.4" rx="1.0" ry="0.9"/><ellipse cx="502.3" cy="131.8" rx="0.9" ry="0.9"/><ellipse cx="536.0" cy="155.5" rx="1.1" ry="0.9"/><ellipse cx="556.6" cy="209.8" rx="1.1" ry="0.6"/><ellipse cx="549.7" cy="157.0" rx="0.7" ry="0.7"/><ellipse cx="545.1" cy="189.7" rx="0.6" ry="0.8"/><ellipse cx="546.3" cy="173.9" rx="0.8" ry="0.7"/><ellipse cx="531.8" cy="156.8" rx="1.2" ry="0.9"/><ellipse cx="553.3" cy="236.6" rx="0.9" ry="0.8"/><ellipse cx="531.1" cy="224.7" rx="1.0" ry="0.9"/><ellipse cx="524.9" cy="229.2" rx="0.7" ry="0.7"/><ellipse cx="567.5" cy="150.1" rx="0.8" ry="0.6"/><ellipse cx="536.2" cy="156.3" rx="1.2" ry="0.8"/><ellipse cx="539.9" cy="185.6" rx="1.0" ry="0.5"/><ellipse cx="521.6" cy="239.9" rx="0.8" ry="0.7"/><ellipse cx="566.7" cy="247.7" rx="0.9" ry="0.6"/><ellipse cx="534.8" cy="242.3" rx="1.2" ry="0.6"/><ellipse cx="561.9" cy="185.4" rx="0.9" ry="0.6"/><ellipse cx="564.0" cy="249.5" rx="0.7" ry="0.8"/><ellipse cx="529.6" cy="238.0" rx="0.6" ry="0.5"/><ellipse cx="556.3" cy="181.3" rx="1.2" ry="0.8"/><ellipse cx="555.7" cy="163.5" rx="1.1" ry="0.9"/><ellipse cx="542.3" cy="157.9" rx="0.8" ry="0.6"/><ellipse cx="555.5" cy="169.6" rx="0.7" ry="0.6"/><ellipse cx="553.2" cy="229.0" rx="0.9" ry="0.8"/><ellipse cx="564.2" cy="209.0" rx="0.8" ry="0.6"/><ellipse cx="566.3" cy="216.7" rx="0.8" ry="0.8"/><ellipse cx="524.5" cy="248.3" rx="0.9" ry="0.7"/><ellipse cx="546.5" cy="154.5" rx="1.0" ry="0.6"/><ellipse cx="532.5" cy="230.3" rx="0.7" ry="0.6"/><ellipse cx="557.8" cy="174.6" rx="0.8" ry="0.7"/><ellipse cx="529.3" cy="239.7" rx="1.3" ry="0.5"/><ellipse cx="543.1" cy="225.1" rx="0.9" ry="0.9"/><ellipse cx="545.0" cy="168.0" rx="1.0" ry="0.8"/><ellipse cx="538.0" cy="215.8" rx="1.1" ry="0.7"/><ellipse cx="545.3" cy="234.5" rx="1.1" ry="0.7"/><ellipse cx="567.6" cy="167.4" rx="1.1" ry="0.6"/><ellipse cx="550.4" cy="173.5" rx="0.9" ry="0.8"/><ellipse cx="559.3" cy="229.1" rx="0.8" ry="0.7"/><ellipse cx="531.1" cy="208.0" rx="0.9" ry="0.5"/><ellipse cx="549.8" cy="221.5" rx="1.0" ry="0.8"/><ellipse cx="529.0" cy="165.2" rx="0.6" ry="0.7"/><ellipse cx="541.7" cy="194.2" rx="0.8" ry="0.8"/><ellipse cx="523.6" cy="240.7" rx="1.0" ry="0.7"/><ellipse cx="559.6" cy="173.8" rx="0.7" ry="0.6"/><ellipse cx="522.1" cy="181.4" rx="1.0" ry="0.7"/><ellipse cx="533.2" cy="208.9" rx="0.7" ry="0.8"/><ellipse cx="528.6" cy="175.5" rx="0.7" ry="0.8"/><ellipse cx="561.5" cy="228.7" rx="0.6" ry="0.7"/><ellipse cx="538.2" cy="171.6" rx="1.3" ry="0.5"/><ellipse cx="544.5" cy="226.1" rx="1.3" ry="0.6"/><ellipse cx="542.8" cy="224.5" rx="0.6" ry="0.6"/><ellipse cx="497.3" cy="198.5" rx="0.9" ry="0.6"/><ellipse cx="464.7" cy="194.6" rx="0.6" ry="0.9"/><ellipse cx="488.4" cy="234.0" rx="0.8" ry="0.6"/><ellipse cx="473.6" cy="204.5" rx="0.9" ry="0.9"/><ellipse cx="460.5" cy="210.2" rx="1.3" ry="0.7"/><ellipse cx="437.8" cy="214.2" rx="1.1" ry="0.5"/><ellipse cx="459.0" cy="231.7" rx="1.2" ry="0.7"/><ellipse cx="497.0" cy="217.8" rx="0.9" ry="0.8"/><ellipse cx="461.7" cy="236.9" rx="0.8" ry="0.6"/><ellipse cx="447.9" cy="223.0" rx="0.7" ry="0.6"/><ellipse cx="450.0" cy="218.1" rx="0.8" ry="0.7"/><ellipse cx="504.5" cy="230.8" rx="1.2" ry="0.6"/><ellipse cx="461.8" cy="194.4" rx="1.1" ry="0.6"/><ellipse cx="454.2" cy="191.1" rx="0.7" ry="0.6"/><ellipse cx="462.5" cy="245.4" rx="1.1" ry="0.6"/><ellipse cx="460.3" cy="199.2" rx="1.3" ry="0.6"/><ellipse cx="488.6" cy="233.4" rx="1.2" ry="0.5"/><ellipse cx="457.5" cy="213.1" rx="0.7" ry="0.9"/><ellipse cx="457.8" cy="236.2" rx="1.0" ry="0.5"/><ellipse cx="462.6" cy="204.3" rx="0.6" ry="0.6"/><ellipse cx="476.7" cy="191.9" rx="0.8" ry="0.7"/><ellipse cx="473.1" cy="198.2" rx="1.1" ry="0.6"/><ellipse cx="485.8" cy="230.0" rx="0.7" ry="0.6"/><ellipse cx="454.6" cy="232.8" rx="0.9" ry="0.7"/><ellipse cx="495.6" cy="203.6" rx="0.8" ry="0.6"/><ellipse cx="450.1" cy="192.4" rx="0.6" ry="0.8"/><ellipse cx="474.6" cy="238.5" rx="1.3" ry="0.6"/><ellipse cx="481.9" cy="245.1" rx="0.8" ry="0.8"/><ellipse cx="481.7" cy="247.3" rx="1.2" ry="0.6"/><ellipse cx="479.3" cy="195.4" rx="0.9" ry="0.7"/><ellipse cx="496.2" cy="296.8" rx="0.8" ry="0.7"/><ellipse cx="504.1" cy="281.1" rx="0.9" ry="0.7"/><ellipse cx="500.0" cy="316.6" rx="0.8" ry="0.5"/><ellipse cx="506.3" cy="299.6" rx="0.7" ry="0.7"/><ellipse cx="519.2" cy="308.7" rx="1.1" ry="0.5"/><ellipse cx="508.1" cy="295.5" rx="0.6" ry="0.7"/><ellipse cx="496.0" cy="304.7" rx="1.0" ry="0.7"/><ellipse cx="505.7" cy="287.7" rx="0.6" ry="0.6"/><ellipse cx="526.1" cy="309.6" rx="0.8" ry="0.8"/><ellipse cx="500.7" cy="302.8" rx="1.0" ry="0.9"/><ellipse cx="507.1" cy="310.3" rx="1.3" ry="0.8"/><ellipse cx="516.6" cy="313.5" rx="0.9" ry="0.7"/><ellipse cx="503.9" cy="328.1" rx="1.2" ry="0.7"/><ellipse cx="526.7" cy="272.7" rx="0.7" ry="0.7"/><ellipse cx="505.1" cy="295.2" rx="1.3" ry="0.6"/><ellipse cx="500.9" cy="286.0" rx="1.1" ry="0.6"/><ellipse cx="494.0" cy="308.1" rx="0.9" ry="0.6"/><ellipse cx="511.8" cy="315.5" rx="1.0" ry="0.7"/><ellipse cx="514.2" cy="328.2" rx="1.3" ry="0.6"/><ellipse cx="506.5" cy="332.0" rx="0.8" ry="0.8"/><ellipse cx="519.0" cy="318.1" rx="1.3" ry="0.8"/><ellipse cx="499.7" cy="313.5" rx="0.9" ry="0.7"/><ellipse cx="507.3" cy="290.0" rx="1.1" ry="0.7"/><ellipse cx="502.5" cy="287.5" rx="0.8" ry="0.6"/><ellipse cx="512.5" cy="278.8" rx="0.6" ry="0.5"/><ellipse cx="416.1" cy="280.2" rx="0.7" ry="0.7"/><ellipse cx="456.3" cy="269.0" rx="0.7" ry="0.8"/><ellipse cx="462.2" cy="247.7" rx="0.8" ry="0.7"/><ellipse cx="457.8" cy="264.6" rx="1.1" ry="0.6"/><ellipse cx="452.9" cy="261.3" rx="0.8" ry="0.8"/><ellipse cx="460.6" cy="286.4" rx="1.0" ry="0.7"/><ellipse cx="452.4" cy="276.1" rx="1.2" ry="0.8"/><ellipse cx="417.5" cy="263.8" rx="1.1" ry="0.6"/><ellipse cx="421.1" cy="245.7" rx="1.0" ry="0.9"/><ellipse cx="468.2" cy="251.7" rx="1.1" ry="0.7"/><ellipse cx="447.9" cy="264.8" rx="1.3" ry="0.9"/><ellipse cx="412.9" cy="280.7" rx="0.7" ry="0.5"/></g>
<g clip-path="url(#domeClip)"><rect x="240" y="10" width="600" height="580" filter="url(#tex)" opacity="0.2"/></g>
</g>
<g id="dots">
<ellipse cx="312.1" cy="574.3" rx="3" ry="2.3" fill="#262627"/><ellipse cx="312.3" cy="573.1" rx="1.1" ry="0.6" fill="#9a9a9a" opacity="0.6"/>
<ellipse cx="327.6" cy="539" rx="3" ry="2.3" fill="#262627"/><ellipse cx="327.8" cy="537.8" rx="1.1" ry="0.6" fill="#9a9a9a" opacity="0.6"/>
<ellipse cx="362.4" cy="527.4" rx="3" ry="2.3" fill="#262627"/><ellipse cx="362.6" cy="526.2" rx="1.1" ry="0.6" fill="#9a9a9a" opacity="0.6"/>
<ellipse cx="378.7" cy="541.4" rx="3" ry="2.3" fill="#262627"/><ellipse cx="378.9" cy="540.2" rx="1.1" ry="0.6" fill="#9a9a9a" opacity="0.6"/>
<ellipse cx="391.6" cy="421.6" rx="3" ry="2.3" fill="#262627"/><ellipse cx="391.8" cy="420.4" rx="1.1" ry="0.6" fill="#9a9a9a" opacity="0.6"/>
<ellipse cx="402" cy="501.9" rx="3" ry="2.3" fill="#262627"/><ellipse cx="402.2" cy="500.7" rx="1.1" ry="0.6" fill="#9a9a9a" opacity="0.6"/>
<ellipse cx="418.2" cy="523.9" rx="3" ry="2.3" fill="#262627"/><ellipse cx="418.4" cy="522.7" rx="1.1" ry="0.6" fill="#9a9a9a" opacity="0.6"/>
<ellipse cx="424.7" cy="490" rx="3" ry="2.3" fill="#262627"/><ellipse cx="424.9" cy="488.8" rx="1.1" ry="0.6" fill="#9a9a9a" opacity="0.6"/>
<ellipse cx="434" cy="394.4" rx="3" ry="2.3" fill="#262627"/><ellipse cx="434.2" cy="393.2" rx="1.1" ry="0.6" fill="#9a9a9a" opacity="0.6"/>
<ellipse cx="449.2" cy="482" rx="3" ry="2.3" fill="#262627"/><ellipse cx="449.4" cy="480.8" rx="1.1" ry="0.6" fill="#9a9a9a" opacity="0.6"/>
<ellipse cx="454.6" cy="512" rx="3" ry="2.3" fill="#262627"/><ellipse cx="454.8" cy="510.8" rx="1.1" ry="0.6" fill="#9a9a9a" opacity="0.6"/>
<ellipse cx="464.9" cy="474.9" rx="3" ry="2.3" fill="#262627"/><ellipse cx="465.1" cy="473.7" rx="1.1" ry="0.6" fill="#9a9a9a" opacity="0.6"/>
<ellipse cx="474.2" cy="499" rx="3" ry="2.3" fill="#262627"/><ellipse cx="474.4" cy="497.8" rx="1.1" ry="0.6" fill="#9a9a9a" opacity="0.6"/>
<ellipse cx="502.2" cy="480.3" rx="3" ry="2.3" fill="#262627"/><ellipse cx="502.4" cy="479.1" rx="1.1" ry="0.6" fill="#9a9a9a" opacity="0.6"/>
<ellipse cx="505" cy="458" rx="3" ry="2.3" fill="#262627"/><ellipse cx="505.2" cy="456.8" rx="1.1" ry="0.6" fill="#9a9a9a" opacity="0.6"/>
<ellipse cx="521" cy="474.2" rx="3" ry="2.3" fill="#262627"/><ellipse cx="521.2" cy="473.0" rx="1.1" ry="0.6" fill="#9a9a9a" opacity="0.6"/>
<ellipse cx="537.4" cy="439.3" rx="3" ry="2.3" fill="#262627"/><ellipse cx="537.6" cy="438.1" rx="1.1" ry="0.6" fill="#9a9a9a" opacity="0.6"/>
<ellipse cx="542.3" cy="466.4" rx="3" ry="2.3" fill="#262627"/><ellipse cx="542.5" cy="465.2" rx="1.1" ry="0.6" fill="#9a9a9a" opacity="0.6"/>
<ellipse cx="566.9" cy="457.6" rx="3" ry="2.3" fill="#262627"/><ellipse cx="567.1" cy="456.4" rx="1.1" ry="0.6" fill="#9a9a9a" opacity="0.6"/>
<ellipse cx="583.6" cy="411.2" rx="3" ry="2.3" fill="#262627"/><ellipse cx="583.8" cy="410.0" rx="1.1" ry="0.6" fill="#9a9a9a" opacity="0.6"/>
<ellipse cx="587" cy="446.9" rx="3" ry="2.3" fill="#262627"/><ellipse cx="587.2" cy="445.7" rx="1.1" ry="0.6" fill="#9a9a9a" opacity="0.6"/>
<ellipse cx="611.1" cy="429.2" rx="3" ry="2.3" fill="#262627"/><ellipse cx="611.3" cy="428.0" rx="1.1" ry="0.6" fill="#9a9a9a" opacity="0.6"/>
<ellipse cx="629.6" cy="417.3" rx="3" ry="2.3" fill="#262627"/><ellipse cx="629.8" cy="416.1" rx="1.1" ry="0.6" fill="#9a9a9a" opacity="0.6"/>
<ellipse cx="642.2" cy="345.5" rx="3" ry="2.3" fill="#262627"/><ellipse cx="642.4" cy="344.3" rx="1.1" ry="0.6" fill="#9a9a9a" opacity="0.6"/>
<ellipse cx="671" cy="374.2" rx="3" ry="2.3" fill="#262627"/><ellipse cx="671.2" cy="373.0" rx="1.1" ry="0.6" fill="#9a9a9a" opacity="0.6"/>
<ellipse cx="739.7" cy="207" rx="3" ry="2.3" fill="#262627"/><ellipse cx="739.9" cy="205.8" rx="1.1" ry="0.6" fill="#9a9a9a" opacity="0.6"/>
<ellipse cx="813.9" cy="197.6" rx="3" ry="2.3" fill="#262627"/><ellipse cx="814.1" cy="196.4" rx="1.1" ry="0.6" fill="#9a9a9a" opacity="0.6"/>
</g>
<defs><radialGradient id="ballG" cx="0.62" cy="0.32" r="0.75"><stop offset="0" stop-color="#b8b8b8"/><stop offset="0.35" stop-color="#7a7a7a"/><stop offset="1" stop-color="#555"/></radialGradient></defs>
<circle cx="455.4" cy="371.3" r="8.4" fill="url(#ballG)" stroke="#9a8070" stroke-width="0.5"/>
</svg>

<div style="position:absolute;left:0;top:21px;width:1px;height:720px;background:#f2f2f4;"></div>
<div id="title">
  <div class="tl" style="left:7px;background:#fc605b;border:1px solid #de4a44;"><div style="position:absolute;left:3px;top:3px;width:4px;height:4px;border-radius:50%;background:#3a0302;"></div></div>
  <div class="tl" style="left:26px;background:#fdbc40;border:1px solid #dea033;"></div>
  <div class="tl" style="left:46px;background:#34c84a;border:1px solid #27aa36;"></div>
  <div class="t">snail - PreForm</div>
</div>

<div id="tb">
  <div class="sep" style="top:53px"></div>
  <div class="sep" style="top:107px"></div>
  <div class="sep" style="top:161px"></div>
  <div class="sep" style="top:214px"></div>
  <div class="or"></div>
  <svg width="53" height="267" style="position:absolute;left:0;top:0">
    <!-- scale icon: y0=71 -->
    <g transform="translate(0,-71)">
      <rect x="11.2" y="85.4" width="24.6" height="24.4" rx="2" fill="none" stroke="#a6a6a6" stroke-width="1.3"/>
      <path d="M10.6,98.6 H20.5 a1.6,1.6 0 0 1 1.6,1.6 V110.4 H12.6 a2,2 0 0 1 -2,-2 Z" fill="#a6a6a6"/>
      <path d="M23,97.3 L30.2,90.1" stroke="#a6a6a6" stroke-width="1.6"/>
      <path d="M25.2,88.3 L32.6,88.3 32.6,95.7 Z" fill="#a6a6a6"/>
    </g>
    <!-- rotate icon -->
    <g transform="translate(0,-71)">
      <path d="M11.6,149.3 C11.6,143 16,139 22.5,139.3" fill="none" stroke="#a6a6a6" stroke-width="1.6"/>
      <path d="M22,133.6 L29.2,139.4 22,145.2 Z" fill="#a6a6a6"/>
      <path d="M25.5,147.8 L27,147.6 36,154.8 36,156.2 29,163.6 27.5,164" fill="none" stroke="#a6a6a6" stroke-width="1.2"/>
      <rect x="14.9" y="150.1" width="13.8" height="14.6" rx="2.6" fill="#a6a6a6"/>
    </g>
    <!-- supports icon -->
    <g transform="translate(0,-71)">
      <rect x="15.5" y="192.3" width="15" height="11" rx="2" transform="rotate(-38 23 197.8)" fill="#e2e2e2"/>
      <path d="M12.9,217.6 V210.6 a2,2 0 0 1 4,0 V217.6 M20.6,217.6 V210.6 a2,2 0 0 1 4,0 V217.6 M28.6,217.6 V206.5 a2,2 0 0 1 4,0 V217.6" fill="none" stroke="#d8d8d8" stroke-width="1.2"/>
      <circle cx="13.6" cy="204.6" r="1.1" fill="#e2e2e2"/>
      <circle cx="25.3" cy="206.6" r="1.1" fill="#e2e2e2"/>
      <circle cx="32" cy="199.5" r="1.1" fill="#e2e2e2"/>
    </g>
    <!-- layout icon -->
    <g transform="translate(0,-71)">
      <path d="M11.8,251.5 L17.5,244.8 23.2,251.5 Z" fill="#a6a6a6"/>
      <path d="M17.5,250.5 V257.2" stroke="#a6a6a6" stroke-width="1.6"/>
      <rect x="25.6" y="246" width="10.1" height="10.2" rx="2.2" fill="none" stroke="#a6a6a6" stroke-width="1.2"/>
      <rect x="12.3" y="259.5" width="10.1" height="9.6" rx="2.2" fill="#a6a6a6"/>
      <path d="M24.3,264.1 H31" stroke="#a6a6a6" stroke-width="1.6"/>
      <path d="M30,258.4 L36.8,264.1 30,269.8 Z" fill="#a6a6a6"/>
    </g>
    <!-- butterfly -->
    <g transform="translate(0,-71)" fill="none" stroke="#f5c49c" stroke-width="1.1" stroke-linejoin="round">
      <path d="M10.6,304 L12.9,301.5 L24.4,308.3 L20.5,314.2 L16.8,313.6 Z"/>
      <path d="M11,304.2 L24.4,308.3 L13,301.6 Z" fill="#f5c49c" fill-opacity="0.55"/>
      <path d="M13.8,316.3 L17.3,313.2 L21.6,315.5 L19.6,321.3 Z"/>
      <path d="M15.9,316.6 L18.3,318.8 L19.8,315.3"/>
      <path d="M24.4,308.3 L35.7,301.9 L38.4,304.2 L32.9,313.3"/>
      <path d="M24.4,308.3 L35.7,301.9 L37.2,303.8 Z" fill="#f5c49c" fill-opacity="0.55"/>
      <path d="M24.8,309 L29.2,321.3 L35,316.3 Z" fill="#f5c49c"/>
    </g>
  </svg>
</div>

<div id="pop">
  <svg width="12" height="22" style="position:absolute;left:-10px;top:17px;overflow:visible"><path d="M10,0.5 L1.2,9.5 10,18.5" fill="#fafbfc" stroke="#b9b9bb" stroke-width="1"/><rect x="9.5" y="1" width="3" height="17" fill="#fafbfc"/></svg>
  <div style="position:absolute;left:14px;top:11px;font-size:14.6px;font-weight:bold;color:#333;letter-spacing:-0.1px;">Supports</div>
  <div class="btn" style="left:14px;top:39px;width:195px;height:34px;background:#2287c4;border:1px solid #1a74b2;color:#fff;font-size:16px;line-height:31px;letter-spacing:-0.5px;box-shadow:0 0 0 1px #fff;">Apply Changes</div>
  <div class="btn" style="left:14px;top:80px;width:195px;height:32px;background:#f5f6f8;border:1px solid #cdcdcf;color:#3a3a3a;font-size:13.8px;line-height:31px;letter-spacing:-0.3px;">Cancel</div>
  <div style="position:absolute;left:14px;top:147px;font-size:13px;color:#8a8a8a;">Point size</div>
  <div style="position:absolute;left:83px;top:154px;width:62px;height:3px;background:#e2e2e4;border-radius:2px;"></div>
  <div style="position:absolute;left:117px;top:147px;width:16px;height:16px;border-radius:50%;background:#fbfbfc;border:1px solid #d4d4d6;"></div>
  <div style="position:absolute;left:160px;top:147px;font-size:13px;color:#8a8a8a;">1.30 mm</div>
</div>


<div id="eye" style="position:absolute;left:990px;top:70px;width:40px;height:37px;background:#f4f4f6;border-radius:5px;"></div>
<div style="position:absolute;left:991px;top:71px;width:40px;height:35px;background:#3f4042;border-radius:4px;">
<svg width="32" height="35" style="position:absolute;left:0;top:0">
<g transform="translate(-991,-71)">
<path d="M1003.8,82.9 Q1010.8,75.6 1017.8,82.9 Q1010.8,90.2 1003.8,82.9 Z" fill="none" stroke="#e6e6e6" stroke-width="1.3"/>
<circle cx="1010.8" cy="82.9" r="1.9" fill="#e6e6e6"/>
<path d="M1000,92 V85" stroke="#e6e6e6" stroke-width="1.3" fill="none"/>
<path d="M997,86.5 L1000,80.5 1003,86.5 Z" fill="#e6e6e6"/>
<path d="M1000,91 H1008" stroke="#e6e6e6" stroke-width="1.3"/>
<path d="M1007.5,88.3 L1013.2,91 1007.5,93.7 Z" fill="#e6e6e6"/>
<path d="M1000,91 L1005.5,96.5" stroke="#e6e6e6" stroke-width="1.3"/>
<path d="M1003.2,98 L1008.6,99.6 1007.2,94.2 Z" fill="#e6e6e6"/>
</g></svg></div>
<!-- scrollbar -->
<div style="position:absolute;left:1011px;top:162px;width:14px;height:439px;background:#fbfbfc;border:1px solid #c4c4c6;border-radius:5px 0 0 5px;"></div>
<div style="position:absolute;left:1015px;top:166px;width:5px;height:405px;background:#ececee;border:1px solid #e0e0e2;border-radius:3px;"></div>
<svg width="20" height="30" style="position:absolute;left:1005px;top:572px;overflow:visible">
<path d="M6.5,6 L10,9.5 6.5,13" fill="#fbfbfc" stroke="#c4c4c6" stroke-width="1"/>
</svg>
<div style="position:absolute;left:1008px;top:581px;width:20px;height:15px;background:#3f4042;border-radius:3px;"></div>
<div style="position:absolute;left:1011px;top:584px;width:11px;height:1px;background:#c8c8c8;"></div>
<div style="position:absolute;left:1011px;top:588px;width:11px;height:1px;background:#c8c8c8;"></div>
<div style="position:absolute;left:1011px;top:591px;width:11px;height:1px;background:#c8c8c8;"></div>

<div id="panel">
  <div class="lb" style="left:20px">Volume</div><div class="vl" style="left:71px">15.7 mL</div>
  <div class="lb" style="left:193px">Layers</div><div class="vl" style="left:240px">701</div>
  <div class="lb" style="left:327px">Print Time</div>
  <div class="btn" style="left:397px;top:10px;width:70px;height:30px;background:#f5f6f8;border:1px solid #c8c8ca;font-size:13px;color:#333;line-height:28px;">Calculate</div>
  <div class="lb" style="left:527px">Material</div>
  <div class="btn" style="left:583px;top:10px;width:119px;height:31px;background:#e8e9eb;border:1px solid #dcdcde;font-size:13px;color:#b3b3b5;line-height:29px;">Black 01 (0.1 mm)</div>
  <div class="lb" style="left:761px">Printer</div><div class="vl" style="left:810px">Form 1+</div>
</div>

<div style="position:absolute;left:0;top:740px;width:1022px;height:1px;background:#f4f4f6;"></div>
</div>
</body></html>
